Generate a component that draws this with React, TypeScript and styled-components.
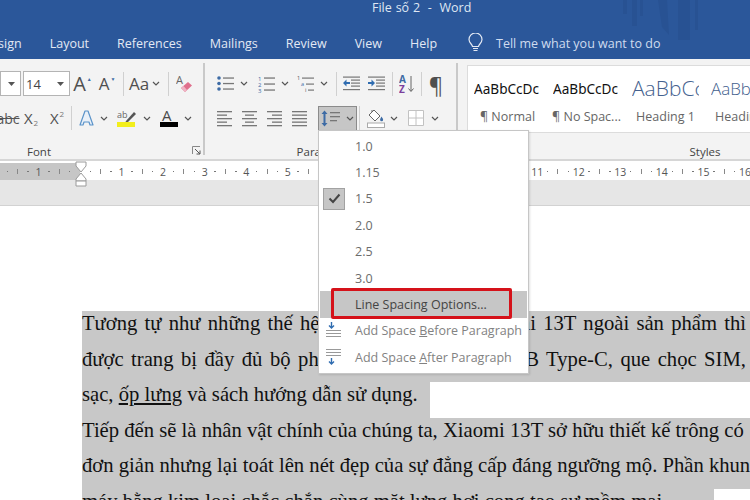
// Word ribbon with the line spacing menu open
import React from 'react';
import styled, { createGlobalStyle } from 'styled-components';

const GlobalStyle = createGlobalStyle`
  html, body {
    margin: 0;
    padding: 0;
    background: #fff;
  }
`;

const Page = styled.div`
  position: relative;
  width: 750px;
  height: 500px;
  overflow: hidden;
  font-family: "Open Sans", "Noto Sans", sans-serif;
  background: #fff;
`;

const TitleBar = styled.div`
  position: relative;
  height: 29px;
  padding: 0 0 0 372px;
  display: flex;
  align-items: flex-start;
  background: #2b579a;
  color: #dfe7f3;
  font-size: 12.5px;
  line-height: 15px;
  word-spacing: 0.6px;
  white-space: pre;
`;

const TitleArt = styled.svg`
  position: absolute;
  top: 0;
  right: 0;
`;

const TabBar = styled.div`
  height: 30px;
  padding-bottom: 2px;
  box-sizing: border-box;
  display: flex;
  align-items: center;
  gap: 28px;
  background: #2b579a;
  color: #e3e9f4;
  font-size: 12.5px;
  white-space: nowrap;
`;

const Tab = styled.div<{ $ml?: number }>`
  margin-left: ${(p) => p.$ml ?? 0}px;
`;

const TellMe = styled.div`
  display: flex;
  align-items: center;
  gap: 13px;
  margin-left: 3px;
  color: #cfdcef;
  font-size: 12.5px;
`;

const Ribbon = styled.div`
  height: 100px;
  display: flex;
  background: #f3f3f3;
  border-bottom: 2px solid #d6d6d6;
  box-sizing: content-box;
`;

const Group = styled.div<{ $w: number; $ml?: number }>`
  position: relative;
  width: ${(p) => p.$w}px;
  flex: none;
  display: flex;
  flex-direction: column;
  margin: 4px 0 4px ${(p) => p.$ml ?? 0}px;
  border-right: 2px solid #c9c9c9;
  box-sizing: border-box;
`;

const IconRow = styled.div<{ $pl?: number }>`
  height: 25px;
  display: flex;
  align-items: center;
  padding-left: ${(p) => p.$pl ?? 0}px;
  margin-top: 8px;
  color: #4f4f4f;

  & + & {
    margin-top: 9.5px;
  }
`;

const GroupLabel = styled.div<{ $pr?: number }>`
  margin-top: auto;
  margin-bottom: -5px;
  padding-right: ${(p) => p.$pr ?? 0}px;
  height: 16px;
  line-height: 16px;
  font-size: 11.5px;
  color: #444;
  text-align: center;
`;

const Launcher = styled.svg`
  position: absolute;
  right: 2px;
  bottom: 0;
`;

const Btn = styled.div<{ $w: number; $ml?: number }>`
  width: ${(p) => p.$w}px;
  margin-left: ${(p) => p.$ml ?? 0}px;
  flex: none;
  display: flex;
  align-items: center;
  justify-content: center;
  position: relative;
`;

const ComboBox = styled.div<{ $w: number; $ml?: number }>`
  width: ${(p) => p.$w}px;
  margin-left: ${(p) => p.$ml ?? 0}px;
  height: 25px;
  flex: none;
  box-sizing: border-box;
  display: flex;
  align-items: center;
  justify-content: space-between;
  padding: 0 5px 0 2px;
  background: #fff;
  border: 1px solid #b4b4b4;
  font-size: 13px;
  color: #444;
`;

const Sep = styled.div<{ $ml?: number; $mr?: number }>`
  width: 1px;
  height: 24px;
  flex: none;
  margin: 0 ${(p) => p.$mr ?? 0}px 0 ${(p) => p.$ml ?? 0}px;
  background: #d0d0d0;
`;

const Active = styled.div`
  width: 39px;
  height: 25px;
  margin-left: 10px;
  flex: none;
  box-sizing: border-box;
  display: flex;
  align-items: center;
  gap: 2px;
  padding-left: 2px;
  background: #c6c6c6;
  border: 1px solid #8b8b8b;
`;

const GlyphA = styled.span<{ $size: number; $color?: string }>`
  font-size: ${(p) => p.$size}px;
  line-height: 1;
  color: ${(p) => p.$color ?? '#4f4f4f'};
`;

const Script = styled.span<{ $up?: boolean; $tiny?: boolean }>`
  font-size: ${(p) => (p.$tiny ? 5 : 8)}px;
  color: ${(p) => (p.$tiny ? '#3d6ba5' : '#777')};
  margin-top: ${(p) => (p.$up ? -10 : 8)}px;
  margin-left: 1px;
`;

const Strike = styled.span`
  font-size: 14px;
  color: #555;
  text-decoration: line-through;
`;

const Gallery = styled.div`
  margin: 2px 0 0 9px;
  height: 66px;
  display: flex;
  background: #fff;
  border: 1px solid #dcdcdc;
  border-right: none;
  overflow: hidden;
`;

const StyleCard = styled.div<{ $w: number }>`
  width: ${(p) => p.$w}px;
  flex: none;
  display: flex;
  flex-direction: column;
  align-items: center;
  padding-top: 8px;
`;

const StylePreview = styled.div<{ $size?: number }>`
  height: 29px;
  width: 67px;
  overflow: hidden;
  white-space: nowrap;
  line-height: 29px;
  font-family: ${(p) => (p.$size ? '"Open Sans", sans-serif' : '"Noto Sans", sans-serif')};
  font-size: ${(p) => p.$size ?? 13.6}px;
  font-weight: ${(p) => (p.$size ? 300 : 400)};
  color: ${(p) => (p.$size ? '#44618e' : '#111')};
`;

const StyleName = styled.div`
  margin-top: 5px;
  font-size: 12.5px;
  color: #666;
  white-space: nowrap;
`;

const Ruler = styled.div`
  height: 17px;
  margin-top: 2px;
  display: flex;
  background: #fff;
  font-size: 10.5px;
  color: #555;
`;

const RulerPart = styled.div<{ $side: 'left' | 'right' }>`
  display: flex;
  align-items: center;
  flex: none;
  box-sizing: border-box;
  justify-content: ${(p) => (p.$side === 'left' ? 'flex-end' : 'flex-start')};
  width: ${(p) => (p.$side === 'left' ? '80px' : '670px')};
  padding: ${(p) => (p.$side === 'left' ? '0 5.2px 0 0' : '0 0 0 5.2px')};
  background: ${(p) => (p.$side === 'left' ? '#c6c6c6' : '#fff')};
  overflow: hidden;
`;

const Mark = styled.div`
  width: 10.4px;
  flex: none;
  display: flex;
  justify-content: center;
  align-items: center;
`;

const Dot = styled.i`
  width: 1.5px;
  height: 1.5px;
  background: #777;
`;

const Bar = styled.i`
  width: 1px;
  height: 5px;
  background: #888;
`;

const Indent = styled.svg`
  position: absolute;
  left: 75px;
  top: 161px;
`;

const Band = styled.div`
  height: 25px;
  background: #e6e6e6;
  border-bottom: 1px solid #d2d2d2;
`;

const Doc = styled.div`
  padding: 105px 0 0 82px;
  font-family: "Liberation Serif", "Times New Roman", serif;
  font-size: 20.65px;
  color: #111;
`;

const Line = styled.div<{ $w?: number; $just?: boolean }>`
  height: 35.5px;
  line-height: 24px;
  width: ${(p) => p.$w ?? 668}px;
  white-space: ${(p) => (p.$just ? 'normal' : 'nowrap')};
  background: #c8c8c8;
  text-align: ${(p) => (p.$just ? 'justify' : 'left')};
  text-align-last: ${(p) => (p.$just ? 'justify' : 'left')};
  padding-right: ${(p) => (p.$just ? 4 : 0)}px;
  box-sizing: border-box;
`;

const Menu = styled.div`
  position: absolute;
  left: 318px;
  top: 130px;
  width: 211px;
  box-sizing: border-box;
  padding: 2px 1px;
  background: #fff;
  border: 1px solid #c6c6c6;
  box-shadow: 1px 1px 2px rgba(0, 0, 0, 0.12);
  font-size: 12.5px;
`;

const MenuItem = styled.div<{ $hl?: boolean; $dim?: boolean }>`
  position: relative;
  height: 26.4px;
  display: flex;
  align-items: center;
  padding-left: 35px;
  white-space: nowrap;
  background: ${(p) => (p.$hl ? '#c6c6c6' : 'transparent')};
  color: ${(p) => (p.$hl ? '#444' : p.$dim ? '#828282' : '#6b6b6b')};
`;

const MenuIcon = styled.div<{ $checked?: boolean }>`
  position: absolute;
  left: 3px;
  top: 2px;
  width: 22px;
  height: 22px;
  box-sizing: border-box;
  display: flex;
  align-items: center;
  justify-content: center;
  background: ${(p) => (p.$checked ? '#c6c6c6' : 'transparent')};
  border: 1px solid ${(p) => (p.$checked ? '#a2a2a2' : 'transparent')};
`;

const RedBox = styled.div`
  position: absolute;
  left: 11px;
  top: -3px;
  width: 181px;
  height: 31px;
  box-sizing: border-box;
  border: 3px solid #d5121a;
  border-radius: 2px;
`;

const Chev = ({ w = 10, ml = 0 }: { w?: number; ml?: number }) => (
  <Btn $w={w} $ml={ml}>
    <svg width="8" height="5" viewBox="0 0 8 5">
      <path d="M1 1l3 3 3-3" fill="none" stroke="#555" strokeWidth="1.2" />
    </svg>
  </Btn>
);

const ComboArrow = () => (
  <svg width="7" height="4" viewBox="0 0 7 4">
    <path d="M0 0h7L3.5 4z" fill="#555" />
  </svg>
);

const Lines = ({ rows, color = '#777' }: { rows: [number, number][]; color?: string }) => (
  <>
    {rows.map(([x, len], i) => (
      <rect key={i} x={x} y={1 + i * (14 / (rows.length - 1 || 1))} width={len} height="1.3" fill={color} />
    ))}
  </>
);

const AlignIcon = ({ rows }: { rows: [number, number][] }) => (
  <svg width="16" height="17" viewBox="0 0 16 17">
    <Lines rows={rows} />
  </svg>
);

const BulletIcon = () => (
  <svg width="17" height="17" viewBox="0 0 17 17">
    <circle cx="2" cy="3" r="1.8" fill="#3d6ba5" />
    <circle cx="2" cy="8.5" r="1.8" fill="#3d6ba5" />
    <circle cx="2" cy="14" r="1.8" fill="#3d6ba5" />
    <rect x="6" y="2.4" width="11" height="1.3" fill="#777" />
    <rect x="6" y="7.9" width="11" height="1.3" fill="#777" />
    <rect x="6" y="13.4" width="11" height="1.3" fill="#777" />
  </svg>
);

const NumberIcon = () => (
  <svg width="17" height="18" viewBox="0 0 17 18">
    <text x="0" y="5.5" fontSize="6" fill="#3d6ba5" fontFamily="Open Sans">1</text>
    <text x="0" y="11.5" fontSize="6" fill="#3d6ba5" fontFamily="Open Sans">2</text>
    <text x="0" y="17.5" fontSize="6" fill="#3d6ba5" fontFamily="Open Sans">3</text>
    <rect x="6" y="2.4" width="11" height="1.3" fill="#777" />
    <rect x="6" y="8.4" width="11" height="1.3" fill="#777" />
    <rect x="6" y="14.4" width="11" height="1.3" fill="#777" />
  </svg>
);

const MultiIcon = () => (
  <svg width="18" height="18" viewBox="0 0 18 18">
    <text x="0" y="5" fontSize="5.5" fill="#555" fontFamily="Open Sans">1</text>
    <text x="4" y="11" fontSize="5.5" fill="#3d6ba5" fontFamily="Open Sans">a</text>
    <text x="8" y="17" fontSize="5.5" fill="#555" fontFamily="Open Sans">i</text>
    <rect x="5" y="2.5" width="12" height="1.2" fill="#777" />
    <rect x="9" y="8.5" width="8" height="1.2" fill="#777" />
    <rect x="11" y="14.5" width="6" height="1.2" fill="#777" />
  </svg>
);

const IndentIcon = ({ out }: { out?: boolean }) => (
  <svg width="17" height="16" viewBox="0 0 17 16">
    <rect x="0" y="0.5" width="17" height="1.2" fill="#777" />
    <rect x="8" y="3.5" width="9" height="1.2" fill="#777" />
    <rect x="8" y="6.5" width="9" height="1.2" fill="#777" />
    <rect x="8" y="9.5" width="9" height="1.2" fill="#777" />
    <rect x="0" y="13" width="17" height="1.2" fill="#777" />
    {out ? (
      <path d="M0 7l3.5-3.5V6H7v2H3.5v2.5z" fill="#2f6cb0" />
    ) : (
      <path d="M7 7L3.5 3.5V6H0v2h3.5v2.5z" fill="#2f6cb0" />
    )}
  </svg>
);

const SortIcon = () => (
  <svg width="16" height="18" viewBox="0 0 16 18">
    <text x="0" y="8" fontSize="10" fontWeight="700" fill="#3d6ba5" fontFamily="Open Sans">A</text>
    <text x="0" y="17.5" fontSize="10" fontWeight="700" fill="#7c3f9c" fontFamily="Open Sans">Z</text>
    <path d="M12 1v15M9.5 13.5l2.5 3 2.5-3" fill="none" stroke="#666" strokeWidth="1" />
  </svg>
);

const SpacingIcon = () => (
  <svg width="20" height="17" viewBox="0 0 20 17">
    <path d="M3.5 0.5L6.5 4H4.500v9h2l-3 3.500-3-3.500h2V4h-2z" fill="#3d6ba5" />
    <rect x="9" y="2" width="10" height="1.3" fill="#777" />
    <rect x="9" y="6" width="10" height="1.3" fill="#777" />
    <rect x="9" y="10" width="7" height="1.3" fill="#777" />
  </svg>
);

const ShadingIcon = () => (
  <svg width="18" height="19" viewBox="0 0 18 19">
    <path d="M7 1l6 6-5 5-6-6z" fill="#fff" stroke="#666" strokeWidth="1" />
    <path d="M5 3V1" stroke="#666" />
    <path d="M14.5 7.5c1.2 1.8 1.6 2.6 1.6 3.2a1.5 1.5 0 0 1-3 0c0-.6.4-1.4 1.4-3.2z" fill="#3d6ba5" />
    <rect x="0.5" y="14" width="17" height="4.5" fill="#fff" stroke="#aaa" />
  </svg>
);

const BorderIcon = () => (
  <svg width="16" height="16" viewBox="0 0 16 16">
    <path d="M.5.5h15v15H.5zM8 .5v15M.5 8h15" fill="#fff" stroke="#c2c2c2" strokeWidth="1" />
  </svg>
);

const EraserIcon = () => (
  <svg width="17" height="18" viewBox="0 0 17 18">
    <text x="0" y="9" fontSize="11" fill="#666" fontFamily="Open Sans">A</text>
    <path d="M5 13l7-6 4 3.5-7 6.5z" fill="#e0708d" />
    <path d="M5 13l2.5-2 3.5 4-2 2z" fill="#f0b4c4" />
  </svg>
);

const HighlightIcon = () => (
  <svg width="20" height="18" viewBox="0 0 20 18">
    <text x="0" y="9" fontSize="9" fill="#666" fontFamily="Open Sans">ab</text>
    <path d="M9 12l8-9 2 2-8 8-3 1z" fill="#555" />
    <rect x="0" y="13" width="18" height="5" fill="#f2ee1c" />
  </svg>
);

const FontColorIcon = () => (
  <svg width="18" height="18" viewBox="0 0 18 18">
    <text x="2" y="12" fontSize="15" fill="#4a4a4a" fontFamily="Open Sans">A</text>
    <rect x="0" y="13" width="18" height="5" fill="#000" />
  </svg>
);

const OutlineA = () => (
  <svg width="15" height="16" viewBox="0 0 15 16">
    <path d="M1 15L6 1h3l5 14h-3l-1-3H5l-1 3z" fill="#e9f0f8" stroke="#5b93c9" strokeWidth="1.2" strokeLinejoin="round" />
  </svg>
);

const Launch = () => (
  <Launcher width="9" height="9" viewBox="0 0 9 9">
    <path d="M.5 8V.5H8" fill="none" stroke="#888" />
    <path d="M3 3l5 5M8 4.5V8H4.5" fill="none" stroke="#555" />
  </Launcher>
);

const BeforeIcon = () => (
  <svg width="16" height="17" viewBox="0 0 16 17">
    <path d="M5.5 0v5M3 3.5L5.5 6 8 3.5" fill="none" stroke="#2f6cb0" strokeWidth="1.4" />
    <rect x="0" y="8" width="15" height="1" fill="#999" />
    <rect x="0" y="11" width="15" height="1" fill="#999" />
    <rect x="0" y="14" width="15" height="1" fill="#999" />
  </svg>
);

const AfterIcon = () => (
  <svg width="16" height="17" viewBox="0 0 16 17">
    <rect x="0" y="0" width="15" height="1" fill="#999" />
    <rect x="0" y="3" width="15" height="1" fill="#999" />
    <rect x="0" y="6" width="15" height="1" fill="#999" />
    <path d="M5.5 9v6M3 12.5L5.5 15 8 12.5" fill="none" stroke="#2f6cb0" strokeWidth="1.4" />
  </svg>
);

const BulbIcon = () => (
  <svg width="15" height="20" viewBox="0 0 15 20">
    <path d="M4.5 13.500c0-2-3.500-3.500-3.500-7a6.500 6.500 0 0 1 13 0c0 3.500-3.500 5-3.500 7z" fill="none" stroke="#e3e9f4" strokeWidth="1.2" />
    <path d="M5 15.500h5M5.500 17.500h4" stroke="#e3e9f4" strokeWidth="1.2" />
  </svg>
);

const range = (from: number, to: number) => {
  const out: number[] = [];
  for (let n = from; n <= to; n++) out.push(n);
  return out;
};

const RulerCell = ({ n }: { n: number }) => (
  <>
    <Mark><Dot /></Mark>
    <Mark><Bar /></Mark>
    <Mark><Dot /></Mark>
    <Mark>{n}</Mark>
  </>
);

const spacings = ['1.0', '1.15', '1.5', '2.0', '2.5', '3.0'];

const styles = [
  { preview: 'AaBbCcDc', name: '¶ Normal' },
  { preview: 'AaBbCcDc', name: '¶ No Spac...' },
  { preview: 'AaBbCc', name: 'Heading 1', size: 21 },
  { preview: 'AaBbCcDc', name: 'Heading 2', size: 17 },
];

const App: React.FC = () => {
  return (
    <Page>
      <GlobalStyle />
      <TitleBar>
        File số 2  -  Word
        <TitleArt width="130" height="42" viewBox="0 0 130 42">
          <path d="M3 0h4v14H3zM12 0h5v26h-5zM20 0h3v16h-3zM38 0l9 0 2 35-7-8zM58 0h12v40H58zM75 0h3v30h-3z" fill="#285293" />
        </TitleArt>
      </TitleBar>
      <TabBar>
        <Tab $ml={-18}>Design</Tab>
        <Tab>Layout</Tab>
        <Tab>References</Tab>
        <Tab>Mailings</Tab>
        <Tab>Review</Tab>
        <Tab>View</Tab>
        <Tab>Help</Tab>
        <TellMe>
          <BulbIcon />
          Tell me what you want to do
        </TellMe>
      </TabBar>
      <Ribbon>
        <Group $w={330} $ml={-125}>
          <IconRow $pl={125}>
            <ComboBox $w={21}><span /><ComboArrow /></ComboBox>
            <ComboBox $w={47} $ml={2}>14<ComboArrow /></ComboBox>
            <Btn $w={25}><GlyphA $size={20}>A</GlyphA><Script $up $tiny>▲</Script></Btn>
            <Btn $w={24}><GlyphA $size={17}>A</GlyphA><Script $up $tiny>▼</Script></Btn>
            <Sep $ml={4} $mr={4} />
            <Btn $w={22}><GlyphA $size={17}>Aa</GlyphA></Btn>
            <Chev w={12} />
            <Sep $ml={6} $mr={4} />
            <Btn $w={22}><EraserIcon /></Btn>
          </IconRow>
          <IconRow $pl={125}>
            <Btn $w={16}><Strike>abc</Strike></Btn>
            <Btn $w={26} $ml={2}><GlyphA $size={15}>X</GlyphA><Script>2</Script></Btn>
            <Btn $w={26}><GlyphA $size={15}>X</GlyphA><Script $up>2</Script></Btn>
            <Sep $ml={1} />
            <Btn $w={26} $ml={1}><OutlineA /></Btn>
            <Chev ml={0} />
            <Btn $w={26} $ml={5}><HighlightIcon /></Btn>
            <Chev ml={2} />
            <Btn $w={26} $ml={4}><FontColorIcon /></Btn>
            <Chev ml={1} />
          </IconRow>
          <GroupLabel>Font</GroupLabel>
          <Launch />
        </Group>
        <Group $w={253}>
          <IconRow $pl={11}>
            <Btn $w={18}><BulletIcon /></Btn>
            <Chev ml={5} />
            <Btn $w={18} $ml={8}><NumberIcon /></Btn>
            <Chev ml={5} />
            <Btn $w={18} $ml={7}><MultiIcon /></Btn>
            <Chev ml={4} />
            <Sep $ml={7} $mr={5} />
            <Btn $w={18}><IndentIcon out /></Btn>
            <Btn $w={18} $ml={7}><IndentIcon /></Btn>
            <Sep $ml={7} $mr={6} />
            <Btn $w={16}><SortIcon /></Btn>
            <Sep $ml={6} $mr={6} />
            <Btn $w={16}><GlyphA $size={22}>¶</GlyphA></Btn>
          </IconRow>
          <IconRow $pl={12}>
            <Btn $w={16}><AlignIcon rows={[[0, 15], [0, 10], [0, 15], [0, 10], [0, 15]]} /></Btn>
            <Btn $w={16} $ml={9}><AlignIcon rows={[[0, 15], [3, 9], [0, 15], [3, 9], [0, 15]]} /></Btn>
            <Btn $w={16} $ml={9}><AlignIcon rows={[[0, 15], [5, 10], [0, 15], [5, 10], [0, 15]]} /></Btn>
            <Btn $w={16} $ml={9}><AlignIcon rows={[[0, 15], [0, 15], [0, 15], [0, 15], [0, 15]]} /></Btn>
            <Active>
              <SpacingIcon />
              <Chev ml={2} w={10} />
            </Active>
            <Sep $ml={2} $mr={6} />
            <Btn $w={19}><ShadingIcon /></Btn>
            <Chev ml={4} />
            <Btn $w={17} $ml={8}><BorderIcon /></Btn>
            <Chev ml={6} />
          </IconRow>
          <GroupLabel $pr={12}>Paragraph</GroupLabel>
        </Group>
        <Group $w={496}>
          <Gallery>
            {styles.map((s, i) => (
              <StyleCard key={i} $w={79}>
                <StylePreview $size={s.size}>{s.preview}</StylePreview>
                <StyleName>{s.name}</StyleName>
              </StyleCard>
            ))}
          </Gallery>
          <GroupLabel>Styles</GroupLabel>
        </Group>
      </Ribbon>
      <Ruler>
        <RulerPart $side="left">
          <Mark><Dot /></Mark><Mark><Bar /></Mark><Mark><Dot /></Mark>
          <Mark>1</Mark>
          <Mark><Dot /></Mark><Mark><Bar /></Mark><Mark><Dot /></Mark>
        </RulerPart>
        <RulerPart $side="right">
          {range(1, 16).map((n) => (
            <RulerCell key={n} n={n} />
          ))}
        </RulerPart>
      </Ruler>
      <Indent width="12" height="26" viewBox="0 0 12 26">
        <path d="M1 1h10v4L6 11 1 5zM6 12l5 6v2H1v-2z" fill="#fff" stroke="#9a9a9a" />
        <path d="M1 20h10v5H1z" fill="#fff" stroke="#9a9a9a" />
      </Indent>
      <Band />
      <Doc>
        <Line $just>Tương tự như những thế hệ trước, điện thoại Xiaomi 13T ngoài sản phẩm thì</Line>
        <Line $just>được trang bị đầy đủ bộ phụ kiện gồm sạc, cáp USB Type-C, que chọc SIM,</Line>
        <Line $w={348}>sạc, <u>ốp lưng</u> và sách hướng dẫn sử dụng.</Line>
        <Line>Tiếp đến sẽ là nhân vật chính của chúng ta, Xiaomi 13T sở hữu thiết kế trông có</Line>
        <Line>đơn giản nhưng lại toát lên nét đẹp của sự đẳng cấp đáng ngưỡng mộ. Phần khung</Line>
        <Line $w={632}>máy bằng kim loại chắc chắn cùng mặt lưng hơi cong tạo sự mềm mại.</Line>
      </Doc>
      <Menu>
        {spacings.map((s) => (
          <MenuItem key={s}>
            {s === '1.5' && (
              <MenuIcon $checked>
                <svg width="13" height="11" viewBox="0 0 13 11">
                  <path d="M1.500 5.500l3.500 3.500 6.500-7.500" fill="none" stroke="#444" strokeWidth="2" />
                </svg>
              </MenuIcon>
            )}
            {s}
          </MenuItem>
        ))}
        <MenuItem $hl>
          Line Spacing Options...
          <RedBox />
        </MenuItem>
        <MenuItem $dim>
          <MenuIcon><BeforeIcon /></MenuIcon>
          <span>Add Space <u>B</u>efore Paragraph</span>
        </MenuItem>
        <MenuItem $dim>
          <MenuIcon><AfterIcon /></MenuIcon>
          <span>Add Space <u>A</u>fter Paragraph</span>
        </MenuItem>
      </Menu>
    </Page>
  );
};

export default App;
